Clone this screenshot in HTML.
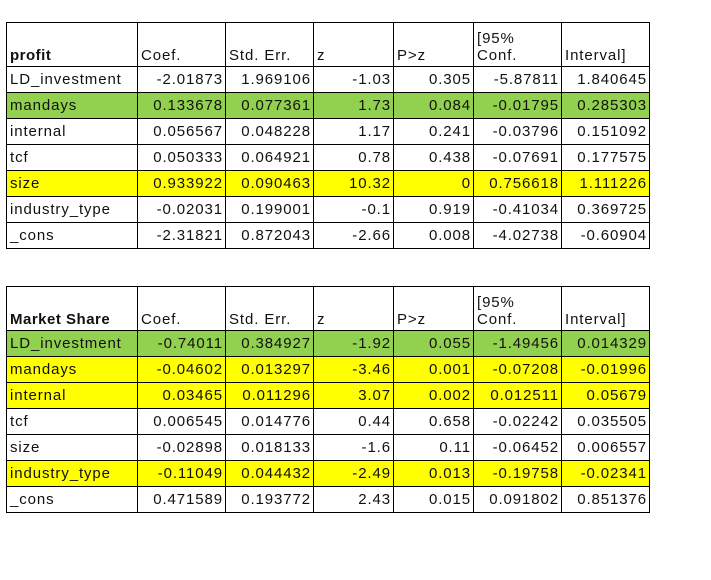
<!DOCTYPE html>
<html><head><style>
body{margin:0;background:#fff;width:711px;height:580px;position:relative;font-family:"Liberation Sans",sans-serif;font-size:15px;letter-spacing:0.9px;color:#111}
table{position:absolute;left:6px;border-collapse:collapse;table-layout:fixed}
td{border:1px solid #000;height:25px;padding:0 2px 0 3px;text-align:right;white-space:nowrap;overflow:hidden;line-height:17px}
td:first-child{text-align:left}
tr.h td{height:41px;vertical-align:bottom;text-align:left;padding-bottom:2px}
tr.h td:first-child{font-weight:bold;letter-spacing:0.5px}
.g td{background:#92d050}.y td{background:#ffff00}
</style></head><body>
<table style="top:22px">
<colgroup><col style="width:131px"><col style="width:88px"><col style="width:88px"><col style="width:80px"><col style="width:80px"><col style="width:88px"><col style="width:88px"></colgroup>
<tr class="h"><td>profit</td><td>Coef.</td><td>Std. Err.</td><td>z</td><td>P&gt;z</td><td>[95%<br>Conf.</td><td>Interval]</td></tr>
<tr><td>LD_investment</td><td>-2.01873</td><td>1.969106</td><td>-1.03</td><td>0.305</td><td>-5.87811</td><td>1.840645</td></tr>
<tr class="g"><td>mandays</td><td>0.133678</td><td>0.077361</td><td>1.73</td><td>0.084</td><td>-0.01795</td><td>0.285303</td></tr>
<tr><td>internal</td><td>0.056567</td><td>0.048228</td><td>1.17</td><td>0.241</td><td>-0.03796</td><td>0.151092</td></tr>
<tr><td>tcf</td><td>0.050333</td><td>0.064921</td><td>0.78</td><td>0.438</td><td>-0.07691</td><td>0.177575</td></tr>
<tr class="y"><td>size</td><td>0.933922</td><td>0.090463</td><td>10.32</td><td>0</td><td>0.756618</td><td>1.111226</td></tr>
<tr><td>industry_type</td><td>-0.02031</td><td>0.199001</td><td>-0.1</td><td>0.919</td><td>-0.41034</td><td>0.369725</td></tr>
<tr><td>_cons</td><td>-2.31821</td><td>0.872043</td><td>-2.66</td><td>0.008</td><td>-4.02738</td><td>-0.60904</td></tr>
</table>
<table style="top:286px">
<colgroup><col style="width:131px"><col style="width:88px"><col style="width:88px"><col style="width:80px"><col style="width:80px"><col style="width:88px"><col style="width:88px"></colgroup>
<tr class="h"><td>Market Share</td><td>Coef.</td><td>Std. Err.</td><td>z</td><td>P&gt;z</td><td>[95%<br>Conf.</td><td>Interval]</td></tr>
<tr class="g"><td>LD_investment</td><td>-0.74011</td><td>0.384927</td><td>-1.92</td><td>0.055</td><td>-1.49456</td><td>0.014329</td></tr>
<tr class="y"><td>mandays</td><td>-0.04602</td><td>0.013297</td><td>-3.46</td><td>0.001</td><td>-0.07208</td><td>-0.01996</td></tr>
<tr class="y"><td>internal</td><td>0.03465</td><td>0.011296</td><td>3.07</td><td>0.002</td><td>0.012511</td><td>0.05679</td></tr>
<tr><td>tcf</td><td>0.006545</td><td>0.014776</td><td>0.44</td><td>0.658</td><td>-0.02242</td><td>0.035505</td></tr>
<tr><td>size</td><td>-0.02898</td><td>0.018133</td><td>-1.6</td><td>0.11</td><td>-0.06452</td><td>0.006557</td></tr>
<tr class="y"><td>industry_type</td><td>-0.11049</td><td>0.044432</td><td>-2.49</td><td>0.013</td><td>-0.19758</td><td>-0.02341</td></tr>
<tr><td>_cons</td><td>0.471589</td><td>0.193772</td><td>2.43</td><td>0.015</td><td>0.091802</td><td>0.851376</td></tr>
</table>
</body></html>
